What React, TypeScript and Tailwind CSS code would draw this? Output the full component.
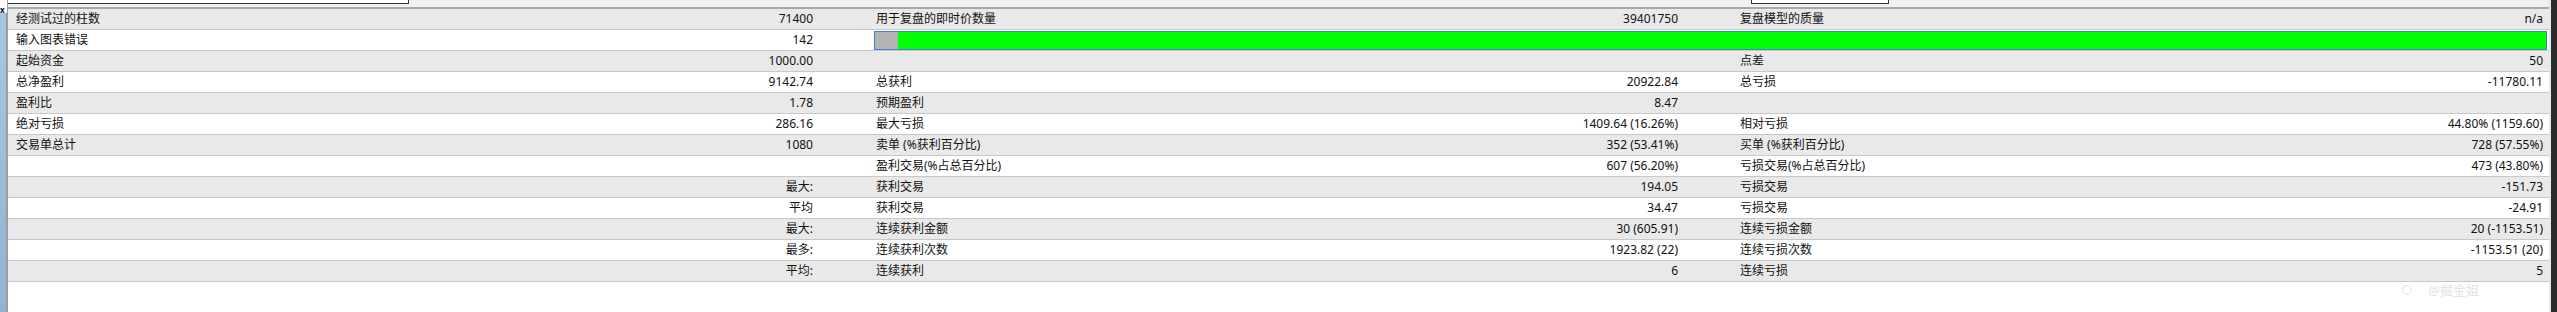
import React from 'react'

type Row = {
  l1?: string
  v1?: string
  l2?: string
  v2?: string
  l3?: string
  v3?: string
  bar?: boolean
}

const rows: Row[] = [
  { l1: '经测试过的柱数', v1: '71400', l2: '用于复盘的即时价数量', v2: '39401750', l3: '复盘模型的质量', v3: 'n/a' },
  { l1: '输入图表错误', v1: '142', bar: true },
  { l1: '起始资金', v1: '1000.00', l3: '点差', v3: '50' },
  { l1: '总净盈利', v1: '9142.74', l2: '总获利', v2: '20922.84', l3: '总亏损', v3: '-11780.11' },
  { l1: '盈利比', v1: '1.78', l2: '预期盈利', v2: '8.47' },
  { l1: '绝对亏损', v1: '286.16', l2: '最大亏损', v2: '1409.64 (16.26%)', l3: '相对亏损', v3: '44.80% (1159.60)' },
  { l1: '交易单总计', v1: '1080', l2: '卖单 (%获利百分比)', v2: '352 (53.41%)', l3: '买单 (%获利百分比)', v3: '728 (57.55%)' },
  { l2: '盈利交易(%占总百分比)', v2: '607 (56.20%)', l3: '亏损交易(%占总百分比)', v3: '473 (43.80%)' },
  { v1: '最大:', l2: '获利交易', v2: '194.05', l3: '亏损交易', v3: '-151.73' },
  { v1: '平均', l2: '获利交易', v2: '34.47', l3: '亏损交易', v3: '-24.91' },
  { v1: '最大:', l2: '连续获利金额', v2: '30 (605.91)', l3: '连续亏损金额', v3: '20 (-1153.51)' },
  { v1: '最多:', l2: '连续获利次数', v2: '1923.82 (22)', l3: '连续亏损次数', v3: '-1153.51 (20)' },
  { v1: '平均:', l2: '连续获利', v2: '6', l3: '连续亏损', v3: '5' },
]

function ReportRow({ row, index }: { row: Row; index: number }) {
  const bg = index % 2 === 0 ? 'bg-[#e9e9e9]' : 'bg-white'
  return (
    <div className={`flex h-[21px] border-b border-[#c8c8c8] ${bg} items-center`}>
      <div className="w-[400px] pl-2 whitespace-nowrap">{row.l1}</div>
      <div className="w-[460px] pr-[55px] text-right whitespace-nowrap">{row.v1}</div>
      {row.bar ? (
        <div className="flex-1 pl-[6px] pr-[2px] h-full flex items-center">
          <div className="w-full h-[19px] border border-[#3d7fd9] flex">
            <div className="w-[23px] bg-[#b3b3b3]" />
            <div className="flex-1 bg-[#00ff00]" />
          </div>
        </div>
      ) : (
        <>
          <div className="w-[400px] pl-2 whitespace-nowrap">{row.l2}</div>
          <div className="w-[464px] pr-[54px] text-right whitespace-nowrap">{row.v2}</div>
          <div className="w-[400px] pl-2 whitespace-nowrap">{row.l3}</div>
          <div className="flex-1 pr-[6px] text-right whitespace-nowrap">{row.v3}</div>
        </>
      )}
    </div>
  )
}

export default function App() {
  return (
    <div
      className="w-[2557px] h-[312px] flex bg-white text-[12px] text-[#111] overflow-hidden"
      style={{ fontFamily: '"Noto Sans", "Noto Sans CJK SC", sans-serif' }}
    >
      {/* left gutter */}
      <div className="w-[7px] flex flex-col">
        <div className="h-[13px] bg-white relative">
          <span className="absolute left-0 top-[6px] text-[8px] leading-none font-bold">x</span>
        </div>
        <div className="flex-1 bg-gradient-to-b from-[#a9c5e2] to-[#97b2d0] border-r border-[#8a9db5]" />
      </div>

      <div className="flex-1 flex flex-col border-l border-[#a0a0a0]">
        {/* top strip */}
        <div className="h-[9px] bg-[#f0f0f0] border-b-2 border-[#a8a8a8] flex">
          <div className="w-[401px] h-[4px] bg-white border-b border-r border-[#333]" />
          <div className="flex-1" />
          <div className="w-[138px] h-[4px] bg-white border border-t-0 border-[#333] mr-[660px]" />
        </div>

        {/* report */}
        <div className="flex-1 relative">
          {rows.map((row, i) => (
            <ReportRow key={i} row={row} index={i} />
          ))}
          <div className="absolute right-[70px] bottom-[12px] flex items-center gap-4 text-[#e2e2e2] text-[13px]">
            <span className="w-[10px] h-[10px] rounded-full border border-[#e2e2e2]" />
            <span>@掘金姐</span>
          </div>
        </div>
      </div>

      {/* right edge */}
      <div className="w-[2px] bg-[#e6e6e6]" />
      <div className="w-[6px] bg-[#2b2b2b]" />
    </div>
  )
}
